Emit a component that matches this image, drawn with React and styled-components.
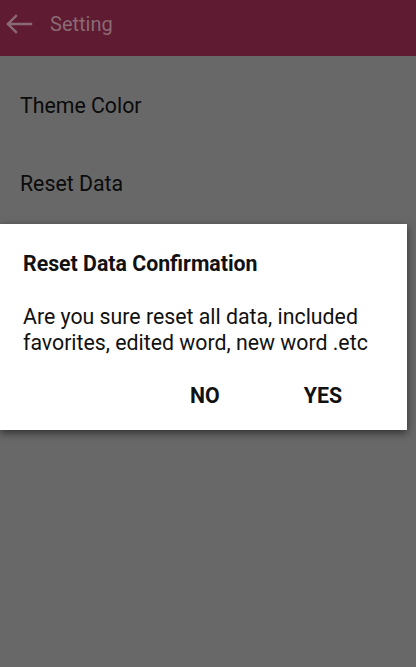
import React from "react";
import styled, { createGlobalStyle } from "styled-components";

const Global = createGlobalStyle`
  html, body { margin: 0; padding: 0; background: #686868; }
  body { font-family: Roboto, "Liberation Sans", sans-serif; }
  * { box-sizing: border-box; }
`;

const Screen = styled.div`
  position: relative;
  width: 416px;
  height: 667px;
  background: #686868;
  overflow: hidden;
`;

const Toolbar = styled.header`
  height: 56px;
  background: #5e1b31;
  display: flex;
  align-items: center;
  padding-left: 5px;
  padding-bottom: 8px;
  gap: 17px;
`;

const BackButton = styled.span`
  display: flex;
  width: 28px;
  height: 28px;
  align-items: center;
  justify-content: center;
`;

const Title = styled.h1`
  margin: 0;
  font-size: 20px;
  font-weight: 400;
  color: #8b6a74;
`;

const List = styled.div`
  display: flex;
  flex-direction: column;
`;

const Row = styled.div`
  height: ${(p) => p.$h}px;
  display: flex;
  align-items: center;
  padding-left: 20px;
  font-size: 21.3px;
  color: #0b0b0b;
`;

const Dialog = styled.div`
  position: absolute;
  left: 0;
  top: 224px;
  width: 407px;
  height: 206px;
  background: #fff;
  box-shadow: 0 3px 8px rgba(0, 0, 0, 0.55);
  padding: 27px 23px 0 23px;
  display: flex;
  flex-direction: column;
`;

const DialogTitle = styled.div`
  font-size: 21.3px;
  font-weight: 700;
  color: #111;
  line-height: 26px;
`;

const Message = styled.div`
  margin-top: 27px;
  font-size: 21.3px;
  line-height: 26px;
  color: #111;
`;

const Actions = styled.div`
  margin-top: 27px;
  display: flex;
  justify-content: flex-end;
  padding-right: 42px;
  gap: 84px;
`;

const Action = styled.span`
  font-size: 21.3px;
  font-weight: 700;
  color: #111;
`;

export default function App() {
  return (
    <>
      <Global />
      <Screen>
        <Toolbar>
          <BackButton>
            <svg width="28" height="20" viewBox="0 0 28 20" fill="none">
              <path
                d="M26 10H3M11 2L3 10L11 18"
                stroke="#8b6a74"
                strokeWidth="2.4"
                strokeLinecap="square"
              />
            </svg>
          </BackButton>
          <Title>Setting</Title>
        </Toolbar>
        <List>
          <Row $h={98}>Theme Color</Row>
          <Row $h={58}>Reset Data</Row>
        </List>
        <Dialog>
          <DialogTitle>Reset Data Confirmation</DialogTitle>
          <Message>
            Are you sure reset all data, included
            <br />
            favorites, edited word, new word .etc
          </Message>
          <Actions>
            <Action>NO</Action>
            <Action>YES</Action>
          </Actions>
        </Dialog>
      </Screen>
    </>
  );
}
